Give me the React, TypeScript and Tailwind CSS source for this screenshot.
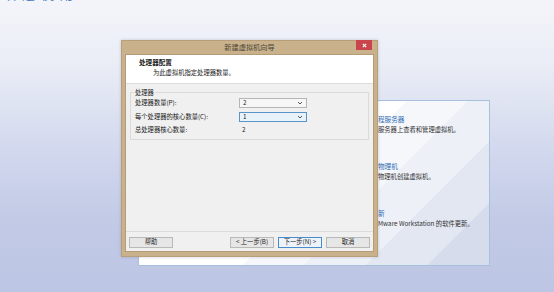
import React from 'react';

const font = "font-['Noto_Sans_CJK_SC','Noto_Sans',sans-serif]";

function Chevron() {
  return (
    <svg width="6" height="4" viewBox="0 0 6 4" className="text-[#555]">
      <path d="M1 1 L3 3 L5 1" fill="none" stroke="currentColor" strokeWidth="1" />
    </svg>
  );
}

function Select({ value, active }: { value: string; active?: boolean }) {
  return (
    <div
      className={`flex items-center justify-between w-[68px] h-[10px] pl-[3px] pr-[3px] border ${
        active ? 'border-[#5b93c4] bg-[#e8f2fb]' : 'border-[#b5b5b5] bg-[#f7f7f7]'
      }`}
    >
      <span className="text-[6.3px] leading-none">{value}</span>
      <Chevron />
    </div>
  );
}

function Button({ label, primary }: { label: string; primary?: boolean }) {
  return (
    <div
      className={`flex items-center justify-center h-[11px] w-[44px] border text-[6.3px] leading-none ${
        primary ? 'border-[#4a8ccb] bg-[#eef3f9]' : 'border-[#b9b9b9] bg-[#e6e6e6]'
      }`}
    >
      {label}
    </div>
  );
}

const homeItems = [
  { title: '程服务器', desc: '服务器上查看和管理虚拟机。' },
  { title: '物理机', desc: '物理机创建虚拟机。' },
  { title: '新', desc: 'Mware Workstation 的软件更新。' },
];

export default function App() {
  return (
    <div
      className={`relative w-[554px] h-[292px] overflow-hidden bg-[linear-gradient(180deg,#f4f5fa_0%,#eaedf6_22%,#d3d9ee_50%,#c2cae6_75%,#bcc5e3_100%)] ${font}`}
    >
      {/* heading of the home page, scrolled almost out of view */}
      <div className="-mt-[13px] h-[13px] pl-[3px] text-[13px] leading-[13px] tracking-[6px] text-[#4f7fc0] whitespace-nowrap">
        欢迎使用 VMware Workstation
      </div>

      {/* home page card behind the wizard */}
      <div className="ml-[138px] mt-[100px] w-[352px] h-[166px] border border-[#a6c0de] bg-[linear-gradient(135deg,#ffffff_0%,#ffffff_52%,#f5f7fb_52%,#f5f7fb_64%,#edf0f7_64%,#edf0f7_76%,#e2e7f2_76%,#e2e7f2_88%,#d6dcec_88%)] flex flex-col pl-[239px] pt-[15px] gap-[30px]">
        {homeItems.map((it) => (
          <div key={it.title} className="flex flex-col gap-[3px] whitespace-nowrap">
            <span className="text-[6.6px] leading-[7px] text-[#2f6db3]">{it.title}</span>
            <span className="text-[6.3px] leading-[7px] text-[#333]">{it.desc}</span>
          </div>
        ))}
      </div>

      {/* wizard dialog */}
      <div className="absolute left-[121px] top-[40px] w-[257px] h-[217px] bg-[#c9b18b] border border-[#b89f79] flex flex-col px-[3px] pb-[4px] shadow-[0_0_3px_rgba(80,80,120,0.25)]">
        <div className="relative h-[13px] flex items-center justify-center">
          <span className="text-[7.2px] leading-none text-[#4b4638]">新建虚拟机向导</span>
          <div className="absolute right-[2px] -top-[1px] w-[16px] h-[10px] bg-[#c9444b] flex items-center justify-center">
            <svg width="5" height="5" viewBox="0 0 5 5">
              <path d="M0.8 0.8 L4.2 4.2 M4.2 0.8 L0.8 4.2" stroke="#fff" strokeWidth="1.1" />
            </svg>
          </div>
        </div>

        <div className="flex-1 flex flex-col bg-[#f0f0f0] border border-[#b59c77] text-[#1c1c1c]">
          <div className="h-[29px] bg-white border-b border-[#dcdcdc] flex flex-col pl-[13px] pt-[4px] gap-[3px]">
            <span className="text-[6.6px] leading-[7px] font-bold">处理器配置</span>
            <span className="pl-[14px] text-[6.3px] leading-[7px]">为此虚拟机指定处理器数量。</span>
          </div>

          <div className="flex-1 px-[4px] pt-[8px]">
            <div className="relative h-[48px] border border-[#dadada] rounded-[1px] flex flex-col pl-[4px] pt-[5px] gap-[4px]">
              <span className="absolute -top-[4px] left-[3px] px-[1px] bg-[#f0f0f0] text-[6.3px] leading-[7px]">
                处理器
              </span>
              <div className="flex items-center">
                <span className="w-[104px] text-[6.3px] leading-none">处理器数量(P):</span>
                <Select value="2" />
              </div>
              <div className="flex items-center">
                <span className="w-[104px] text-[6.3px] leading-none">每个处理器的核心数量(C):</span>
                <Select value="1" active />
              </div>
              <div className="flex items-center pt-[1px]">
                <span className="w-[107px] text-[6.3px] leading-none">总处理器核心数量:</span>
                <span className="text-[6.3px] leading-none">2</span>
              </div>
            </div>
          </div>

          <div className="border-t border-[#dcdcdc] flex items-center px-[3px] pt-[5px] pb-[3px]">
            <Button label="帮助" />
            <div className="flex-1" />
            <div className="flex gap-[4px]">
              <Button label="< 上一步(B)" />
              <Button label="下一步(N) >" primary />
              <Button label="取消" />
            </div>
          </div>
        </div>
      </div>
    </div>
  );
}
